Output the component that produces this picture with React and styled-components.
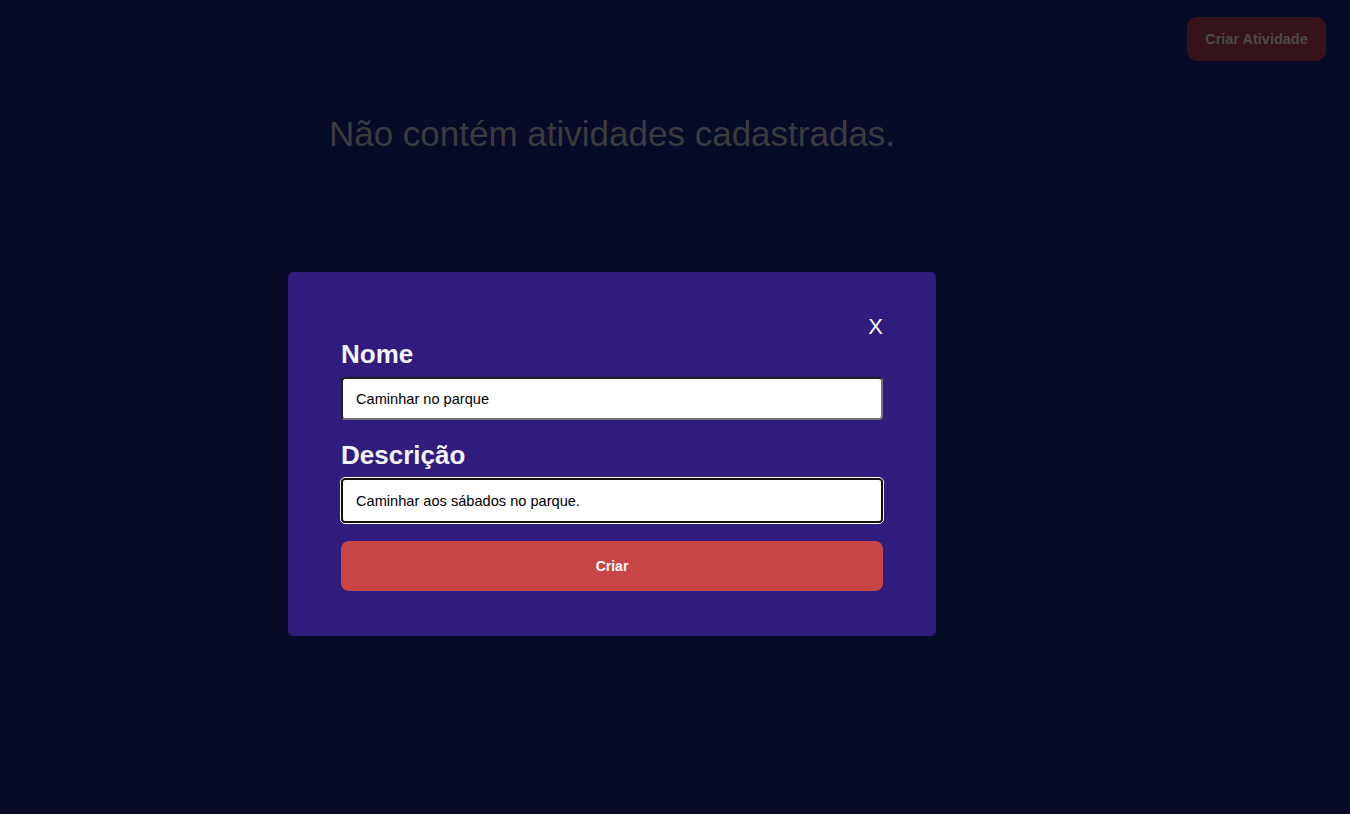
import { useState } from "react"
import styled, { createGlobalStyle } from "styled-components"

const GlobalStyle = createGlobalStyle`
    * {
        box-sizing: border-box;
    }

    body {
        margin: 0;
        background: #060b26;
        font-family: "Liberation Sans", Arial, sans-serif;
    }
`

const App = () => {
    const [nome, setNome] = useState("Caminhar no parque")
    const [descricao, setDescricao] = useState("Caminhar aos sábados no parque.")

    return (
        <Page>
            <GlobalStyle />
            <Header>
                <HeaderButton>Criar Atividade</HeaderButton>
            </Header>

            <Main>
                <Empty>Não contém atividades cadastradas.</Empty>
            </Main>

            <Overlay>
                <Modal>
                    <CloseRow>
                        <Close>X</Close>
                    </CloseRow>
                    <Form onSubmit={(e) => e.preventDefault()}>
                        <Label htmlFor="nome">Nome</Label>
                        <Input id="nome" value={nome} onChange={(e) => setNome(e.target.value)} />

                        <Label htmlFor="descricao">Descrição</Label>
                        <Input
                            id="descricao"
                            focused
                            autoFocus
                            value={descricao}
                            onChange={(e) => setDescricao(e.target.value)}
                        />

                        <Submit type="submit">Criar</Submit>
                    </Form>
                </Modal>
            </Overlay>
        </Page>
    )
}

const Page = styled.div`
    min-height: 100vh;
    background: #060b26;
`

const Header = styled.header`
    display: flex;
    justify-content: flex-end;
    padding: 17px 24px 0;
`

const HeaderButton = styled.button`
    width: 139px;
    height: 44px;
    border: none;
    border-radius: 10px;
    background: #351419;
    color: #4b4b4b;
    font-family: "Liberation Sans", Arial, sans-serif;
    font-weight: bold;
    font-size: 14.5px;
    cursor: pointer;
`

const Main = styled.main`
    width: 1224px;
    display: flex;
    justify-content: center;
    padding-top: 53px;
`

const Empty = styled.h1`
    margin: 0;
    color: #3b3b3f;
    font-weight: normal;
    font-size: 35px;
`

const Overlay = styled.div`
    position: fixed;
    inset: 0;
    width: 1224px;
    display: flex;
    justify-content: center;
    align-items: flex-start;
    padding-top: 272px;
`

const Modal = styled.div`
    width: 648px;
    background: #2f1c7c;
    border-radius: 5px;
    padding: 44px 53px 45px;
`

const CloseRow = styled.div`
    display: flex;
    justify-content: flex-end;
    margin-bottom: 1px;
`

const Close = styled.button`
    border: none;
    background: none;
    padding: 0;
    color: #ffffff;
    font-family: "Liberation Sans", Arial, sans-serif;
    font-size: 22px;
    line-height: 22px;
    cursor: pointer;
`

const Form = styled.form`
    display: flex;
    flex-direction: column;
`

const Label = styled.label`
    color: #f4f2fb;
    font-weight: bold;
    font-size: 26px;
    line-height: 30px;
    margin-bottom: 8px;
`

const Input = styled.input`
    height: ${(props) => (props.focused ? "45px" : "43px")};
    margin-bottom: ${(props) => (props.focused ? "18px" : "20px")};
    padding: 0 13px;
    background: #ffffff;
    color: #000000;
    font-family: "Liberation Sans", Arial, sans-serif;
    font-size: 14.6px;
    border-radius: 4px;
    border: ${(props) => (props.focused ? "2px solid #111111" : "2px inset #767676")};
    outline: ${(props) => (props.focused ? "1px solid #ffffff" : "none")};

    &:focus {
        border: 2px solid #111111;
        outline: 1px solid #ffffff;
    }
`

const Submit = styled.button`
    height: 50px;
    border: none;
    border-radius: 8px;
    background: #c94545;
    color: #ffffff;
    font-family: "Liberation Sans", Arial, sans-serif;
    font-weight: bold;
    font-size: 14px;
    cursor: pointer;
`

export default App
